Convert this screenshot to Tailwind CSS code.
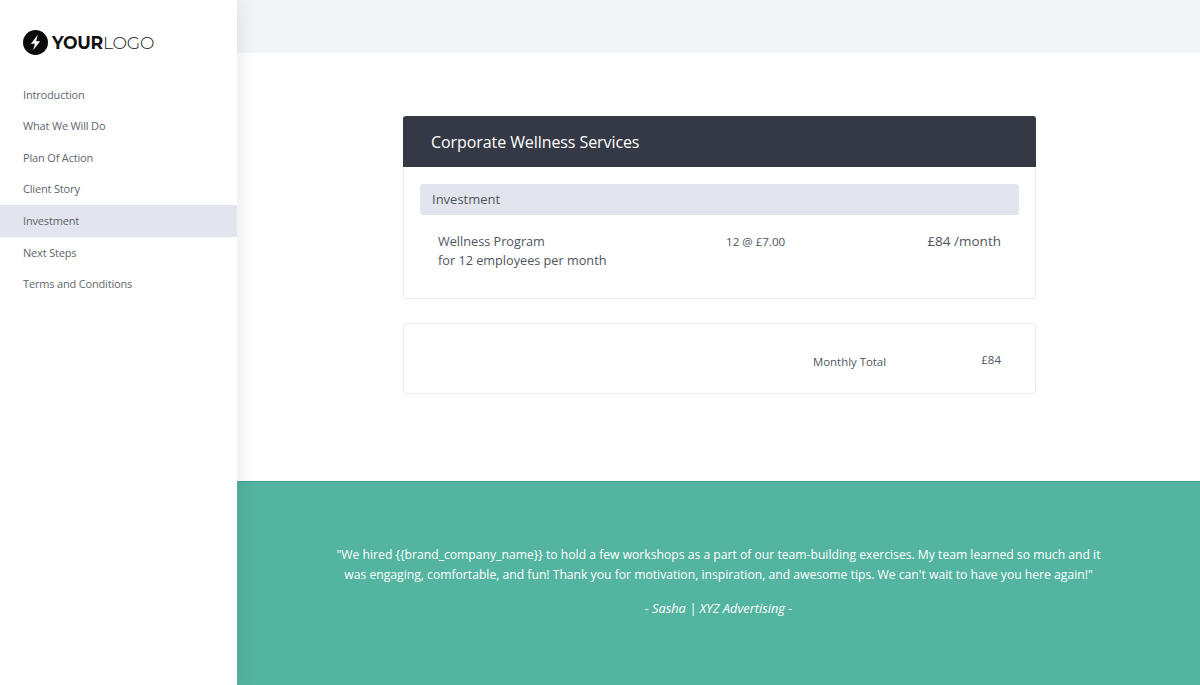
<!DOCTYPE html>
<html>
<head>
<meta charset="utf-8">
<script src="https://cdn.jsdelivr.net/npm/@tailwindcss/browser@4"></script>
</head>
<body class="bg-white">
<div class="flex h-[685px] w-[1200px] overflow-hidden bg-white font-['Open_Sans',sans-serif]">
  <aside class="relative z-10 h-full w-[237px] shrink-0 bg-white shadow-[0_0_20px_rgba(40,45,60,0.13)]">
    <div class="flex h-[79px] items-center gap-[4px] pl-[23px] pt-[6px]">
      <svg width="25" height="25" viewBox="0 0 25 25"><circle cx="12.5" cy="12.5" r="12.5" fill="#0b0b0b"/><path d="M14.8 4.8 L7.9 13.7 H11.9 L10.2 20.2 L17.1 11.2 H13.1 Z" fill="#fff"/></svg>
      <span class="font-['Montserrat','Inter',sans-serif] text-[17.2px] leading-none tracking-[-0.2px] text-[#111]"><span class="font-bold">YOUR</span><span class="font-light">LOGO</span></span>
    </div>
    <nav class="text-[11px] tracking-[-0.17px] text-[#61666d]">
      <div class="flex h-[31.6px] items-center pl-[23px]">Introduction</div>
      <div class="flex h-[31.6px] items-center pl-[23px]">What We Will Do</div>
      <div class="flex h-[31.6px] items-center pl-[23px]">Plan Of Action</div>
      <div class="flex h-[31.6px] items-center pl-[23px]">Client Story</div>
      <div class="flex h-[31.6px] items-center bg-[#e2e5ed] pl-[23px]">Investment</div>
      <div class="flex h-[31.6px] items-center pl-[23px]">Next Steps</div>
      <div class="flex h-[31.6px] items-center pl-[23px]">Terms and Conditions</div>
    </nav>
  </aside>
  <main class="flex h-full min-w-0 flex-1 flex-col">
    <div class="h-[53px] bg-[#f3f4f8]"></div>
    <div class="flex h-[428px] flex-col pl-[166px] pt-[63px]">
      <section class="h-[183px] w-[633px] rounded-[3px] border border-[#ebecef]">
        <div class="-mx-px -mt-px flex h-[51px] items-center rounded-t-[3px] bg-[#353946] pl-[28px] text-[16px] tracking-[-0.08px] text-white">Corporate Wellness Services</div>
        <div class="px-[16px] pt-[17px]">
          <div class="flex h-[31px] items-center rounded-[3px] bg-[#e2e5ed] pl-[12px] text-[13px] text-[#50555d]">Investment</div>
          <div class="flex pl-[18px] pr-[18px] pt-[17px] text-[#50555d]">
            <div class="w-[288px] text-[12.7px] leading-[19px]">Wellness Program<br>for 12 employees per month</div>
            <div class="w-[100px] text-[11.6px] leading-[19px]">12 @ £7.00</div>
            <div class="flex-1 text-right text-[13.5px] leading-[19px]">£84 /month</div>
          </div>
        </div>
      </section>
      <section class="mt-[24px] flex h-[71px] w-[633px] rounded-[3px] border border-[#ebecef] text-[#50555d]">
        <div class="ml-[409px] mt-[29px] text-[11.4px] leading-[18px]">Monthly Total</div>
        <div class="ml-auto mr-[34px] mt-[27px] text-[11.5px] leading-[18px]">£84</div>
      </section>
    </div>
    <div class="flex flex-1 flex-col items-center border-t border-[#4a9f8d] bg-[#53b49f] pt-[63px] text-center text-[12.17px] leading-[20px] text-white">
      <p class="w-[780px]">"We hired {{brand_company_name}} to hold a few workshops as a part of our team-building exercises. My team learned so much and it was engaging, comfortable, and fun! Thank you for motivation, inspiration, and awesome tips. We can't wait to have you here again!"</p>
      <p class="mt-[13px] text-[12.8px] italic">- Sasha | XYZ Advertising -</p>
    </div>
  </main>
</div>
</body>
</html>
